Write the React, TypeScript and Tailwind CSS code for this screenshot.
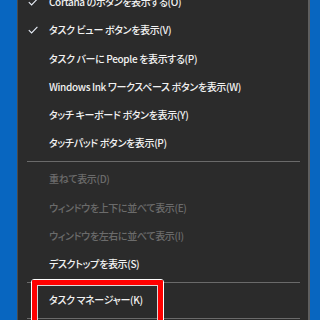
import React from "react";

type Item =
  | { kind: "item"; label: string; checked?: boolean; disabled?: boolean }
  | { kind: "sep" };

const items: Item[] = [
  { kind: "item", label: "Cortana のボタンを表示する(O)", checked: true },
  { kind: "item", label: "タスク ビュー ボタンを表示(V)", checked: true },
  { kind: "item", label: "タスク バーに People を表示する(P)" },
  { kind: "item", label: "Windows Ink ワークスペース ボタンを表示(W)" },
  { kind: "item", label: "タッチ キーボード ボタンを表示(Y)" },
  { kind: "item", label: "タッチパッド ボタンを表示(P)" },
  { kind: "sep" },
  { kind: "item", label: "重ねて表示(D)", disabled: true },
  { kind: "item", label: "ウィンドウを上下に並べて表示(E)", disabled: true },
  { kind: "item", label: "ウィンドウを左右に並べて表示(I)", disabled: true },
  { kind: "item", label: "デスクトップを表示(S)" },
  { kind: "sep" },
  { kind: "item", label: "タスク マネージャー(K)" },
  { kind: "sep" },
];

function Check() {
  return (
    <svg width="10" height="8" viewBox="0 0 10 8" className="block">
      <path d="M0.8 4.2 L3.6 7 L9.4 0.9" fill="none" stroke="#e8eef8" strokeWidth="1.1" />
    </svg>
  );
}

export default function App() {
  return (
    <div
      className="relative w-[320px] h-[320px] overflow-hidden flex bg-[#0866c0] [font-feature-settings:'palt'] text-[10px] tracking-[-0.35px] font-medium"
      style={{ fontFamily: '"Noto Sans CJK JP", "Noto Sans", sans-serif' }}
    >
      <div className="w-[17px] shrink-0" />
      <div className="flex-1 bg-[#2b2b2b] border-l border-[#4a4a4a] border-r-2 border-r-[#5e5e5e]">
        <div className="flex flex-col -mt-[12px]">
          {items.map((it, i) =>
            it.kind === "sep" ? (
              <div key={i} className="h-[7.75px] flex items-center pl-[9px] pr-[8px] shrink-0">
                <div className="h-px w-full bg-[#6a6a6a]" />
              </div>
            ) : (
              <div key={i} className="h-[28.25px] flex items-center shrink-0">
                <div className="w-[31px] pl-[10px] flex items-center">
                  {it.checked ? <Check /> : null}
                </div>
                <span
                  className={
                    "whitespace-nowrap leading-none " +
                    (it.disabled ? "text-[#6b6b6b]" : "text-[#f2f2f2]")
                  }
                >
                  {it.label}
                </span>
              </div>
            )
          )}
        </div>
      </div>
      <div className="w-[10px] shrink-0" />
      <div className="absolute left-[31px] top-[279px] w-[133px] h-[60px] rounded-[3px] border border-white">
        <div className="w-full h-full border-[5px] border-[#ff0000] rounded-[1px]">
          <div className="w-full h-full border border-[#d8d8d8]" />
        </div>
      </div>
    </div>
  );
}
